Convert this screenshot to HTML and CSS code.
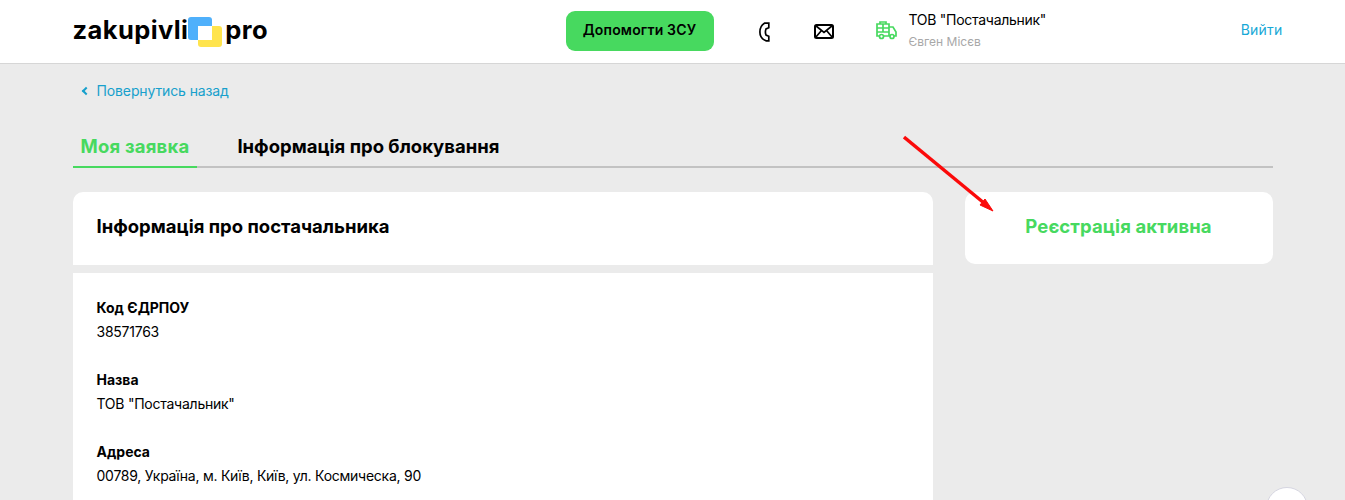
FILE: index.html
```html
<!DOCTYPE html>
<html lang="uk">
<head>
  <meta charset="UTF-8">
  <title>zakupivli.pro</title>
  <link rel="stylesheet" href="styles.css">
</head>
<body>

  <header class="topbar">
    <div class="topbar-inner">
      <a class="logo" href="#">
        <span class="logo-word">zakupivli</span>
        <svg class="logo-mark" width="34" height="30" viewBox="0 0 34 30">
          <rect x="10" y="9" width="24" height="21" rx="3" fill="#ffe44d"/>
          <rect x="0" y="0" width="24" height="23" rx="3" fill="#4fb0fb"/>
          <rect x="10" y="9" width="14" height="14" fill="#fff"/>
        </svg>
        <span class="logo-word logo-pro">pro</span>
      </a>
      <a class="help-btn" href="#">Допомогти ЗСУ</a>
      <a class="icon-link phone" href="#">
        <svg width="11" height="20" viewBox="0 0 11 20" fill="none" stroke="#000" stroke-width="1.700">
          <path d="M5.500 1.200 L9.800 1.200 L9.800 5.800 L7 7 C6.200 9 6.200 11 7 13 L9.800 14.200 L9.800 18.800 L7 18.800 C2.500 17 .9 13.500 .9 10 C.9 6.500 2.500 3 5.500 1.200 Z"/>
        </svg>
      </a>
      <a class="icon-link mail" href="#">
        <svg width="20" height="15" viewBox="0 0 20 15" fill="none" stroke="#000" stroke-width="2">
          <rect x="1" y="1" width="18" height="13" rx="1.500"/>
          <path d="M1.500 1.500 L10 8.500 L18.500 1.500 M1.500 13.500 L7.500 6.500 M18.500 13.500 L12.500 6.500" stroke-width="1.700"/>
        </svg>
      </a>
      <svg class="truck" width="21" height="19" viewBox="0 0 21 19" fill="none" stroke="#47d95f" stroke-width="1.700">
        <path d="M3.500 15 H1 V3 H13 V15 H7.500 M13 6 H17 L20 11 V15 H18 M13 15 H14"/>
        <path d="M1 7 H13 M1 11 H13 M7 3 V11 M4 3 V1 H10 V3"/>
        <circle cx="5.500" cy="15.500" r="2"/>
        <circle cx="16" cy="15.500" r="2"/>
      </svg>
      <div class="account">
        <div class="account-name">ТОВ "Постачальник"</div>
        <div class="account-person">Євген Місєв</div>
      </div>
      <a class="logout" href="#">Вийти</a>
    </div>
  </header>

  <main class="page">
    <a class="back-link" href="#"><span class="back-arrow"></span>Повернутись назад</a>

    <nav class="tabs">
      <a class="tab active" href="#">Моя заявка</a>
      <a class="tab" href="#">Інформація про блокування</a>
    </nav>

    <div class="columns">
      <section class="main-col">
        <div class="card card-head">
          <h2>Інформація про постачальника</h2>
        </div>
        <div class="card card-body">
          <div class="field">
            <div class="field-label">Код ЄДРПОУ</div>
            <div class="field-value">38571763</div>
          </div>
          <div class="field">
            <div class="field-label">Назва</div>
            <div class="field-value">ТОВ "Постачальник"</div>
          </div>
          <div class="field">
            <div class="field-label">Адреса</div>
            <div class="field-value">00789, Україна, м. Київ, Київ, ул. Космическа, 90</div>
          </div>
        </div>
      </section>
      <aside class="side-col">
        <div class="status-card">Реєстрація активна</div>
      </aside>
    </div>
  </main>

  <!-- стрілка-позначка поверх сторінки -->
  <svg class="annotation" width="100" height="84" viewBox="0 0 100 84">
    <path d="M1 2 L81 68" stroke="#fb0a0a" stroke-width="3.400" fill="none"/>
    <path d="M90 76 L77 70 L82 64 Z" fill="#fb0a0a" stroke="#fb0a0a" stroke-width="1"/>
  </svg>

  <button class="scroll-top"></button>
</body>
</html>
```

FILE: styles.css
```css
html, body {
  height: 500px;
  overflow: hidden;
}
body {
  margin: 0;
  background: #ebebeb;
  font-family: 'Inter', 'Liberation Sans', sans-serif;
  color: #000;
}
a {
  text-decoration: none;
  color: inherit;
}
.topbar {
  background: #fff;
  height: 63px;
  border-bottom: 1px solid #d6d6d6;
}
.topbar-inner {
  width: 1200px;
  height: 63px;
  margin: 0 auto;
  display: flex;
  align-items: center;
}
.logo {
  display: flex;
  align-items: center;
  flex: none;
  width: 493px;
  font-weight: 700;
  font-size: 25.500px;
  letter-spacing: .4px;
}
.logo-word {
  margin-top: -4px;
}
.logo-pro {
  margin-left: 3px;
}
.help-btn {
  flex: none;
  width: 148px;
  height: 40px;
  line-height: 38px;
  text-align: center;
  background: #47d95f;
  border-radius: 9px;
  font-size: 14px;
  font-weight: 600;
  letter-spacing: .15px;
  margin-top: -1px;
}
.icon-link {
  display: flex;
  align-items: center;
  flex: none;
}
.phone {
  margin-left: 45px;
}
.mail {
  margin-left: 44px;
}
.truck {
  flex: none;
  margin-left: 42px;
  margin-top: -2px;
}
.account {
  flex: 1;
  margin-left: 12px;
  margin-top: -4px;
}
.account-name {
  font-size: 14px;
  line-height: 20px;
  letter-spacing: -.28px;
}
.account-person {
  font-size: 12px;
  line-height: 16px;
  margin-top: 4px;
  color: #a8a8a8;
}
.logout {
  flex: none;
  color: #17a8d6;
  font-size: 14px;
  letter-spacing: .2px;
  margin-right: -10px;
  margin-top: -5px;
}
.page {
  width: 1200px;
  margin: 0 auto;
}
.back-link {
  display: flex;
  align-items: center;
  color: #17a0cc;
  font-size: 14px;
  line-height: 20px;
  letter-spacing: -.12px;
  margin: 17px 0 0 10px;
}
.back-arrow {
  width: 4px;
  height: 4px;
  border-left: 2px solid #17a0cc;
  border-bottom: 2px solid #17a0cc;
  transform: rotate(45deg);
  margin-right: 8px;
}
.tabs {
  display: flex;
  gap: 32px;
  margin-top: 31px;
  height: 34px;
  border-bottom: 2px solid #c2c2c2;
}
.tab {
  font-size: 18.500px;
  font-weight: 700;
  line-height: 28px;
  padding: 0 8px;
  height: 34px;
}
.tab.active {
  color: #47d95f;
  letter-spacing: .2px;
  border-bottom: 2px solid #47d95f;
}
.columns {
  display: flex;
  gap: 32px;
  margin-top: 24px;
}
.main-col {
  width: 860px;
}
.side-col {
  width: 308px;
}
.card {
  background: #fff;
}
.card-head {
  height: 67px;
  border-radius: 10px 10px 0 0;
  margin-bottom: 8px;
  padding: 0 24px 6px;
  display: flex;
  align-items: center;
}
.card-head h2 {
  margin: 0;
  font-size: 18.500px;
  font-weight: 700;
}
.card-body {
  padding: 23px 24px 40px;
}
.field {
  margin-bottom: 24px;
}
.field-label {
  font-size: 14px;
  font-weight: 700;
  line-height: 24px;
}
.field-value {
  font-size: 14px;
  line-height: 24px;
  letter-spacing: -.25px;
}
.status-card {
  background: #fff;
  border-radius: 10px;
  height: 72px;
  line-height: 68px;
  text-align: center;
  color: #47d95f;
  font-size: 18.500px;
  font-weight: 700;
  letter-spacing: .1px;
}
.annotation {
  position: absolute;
  left: 903px;
  top: 135px;
}
.scroll-top {
  position: fixed;
  left: 1266px;
  top: 487px;
  width: 42px;
  height: 42px;
  border-radius: 50%;
  background: #fff;
  border: 1px solid #d5d5e0;
  padding: 0;
}
```
